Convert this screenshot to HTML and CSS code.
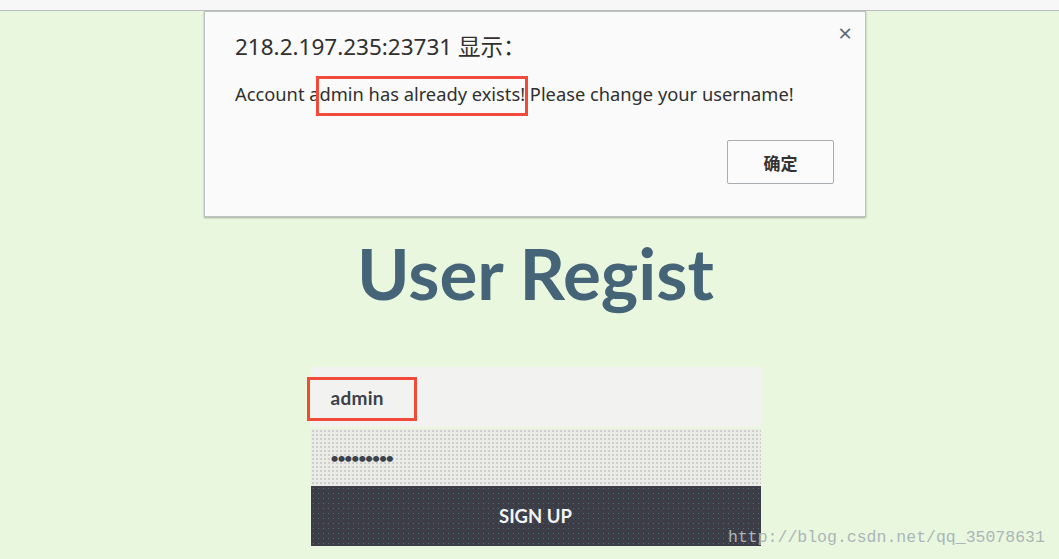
FILE: index.html
```html
<!DOCTYPE html>
<html>
<head>
<meta charset="utf-8">
<link rel="stylesheet" href="styles.css">
</head>
<body>
<div class="topbar"></div>
<main class="page">
  <h1 class="title">User Regist</h1>
  <form class="form">
    <div class="field field-user"><span class="val">admin</span></div>
    <div class="field field-pass"><span class="val dots">•••••••••</span></div>
    <div class="btn-signup">SIGN UP</div>
    <div class="mark mark-user"></div>
  </form>
</main>
<div class="dialog">
  <div class="dlg-title">218.2.197.235:23731 显示：</div>
  <div class="dlg-close">×</div>
  <div class="dlg-msg">Account admin has already exists! Please change your username!</div>
  <div class="mark mark-msg"></div>
  <div class="dlg-actions"><div class="dlg-ok">确定</div></div>
</div>
<div class="watermark">http://blog.csdn.net/qq_35078631</div>
</body>
</html>
```
FILE: styles.css
```css
html, body {
  margin: 0;
  padding: 0;
  width: 1059px;
  height: 559px;
  overflow: hidden;
  background: #e9f7de;
  font-family: "Noto Sans", "Noto Sans CJK SC", sans-serif;
}
body { position: relative; }
.topbar {
  height: 10px;
  background: #f7f7f7;
  border-bottom: 1px solid #b9bdbd;
}
.page {
  display: flex;
  flex-direction: column;
  align-items: center;
}
.title {
  margin: 217px 0 0 0;
  font-family: "Lato", sans-serif;
  font-weight: 700;
  font-size: 71px;
  line-height: 90px;
  color: #456477;
  padding-left: 12px;
}
.form {
  position: relative;
  margin: 49px 0 0 12px;
  width: 450px;
  display: flex;
  flex-direction: column;
}
.field {
  height: 60px;
  display: flex;
  align-items: center;
  padding-left: 20px;
  box-sizing: border-box;
  font-family: "Lato", sans-serif;
  font-weight: 700;
  color: #3b414a;
}
.field-user {
  background: #f2f3f1;
  font-size: 19px;
  letter-spacing: 0.3px;
}
.field-pass {
  margin-top: 2px;
  height: 57px;
  background-color: #ebebe8;
  background-image: radial-gradient(#bfbfbf 0.6px, transparent 0.9px);
  background-size: 4px 4px;
  font-size: 14px;
  letter-spacing: -1.2px;
}
.val { display: inline-block; }
.mark {
  position: absolute;
  border: 3px solid #ef4a3a;
  box-sizing: border-box;
}
.mark-user {
  left: -4px;
  top: 10px;
  width: 110px;
  height: 44px;
}
.btn-signup {
  height: 60px;
  background-color: #3c3d47;
  background-image: radial-gradient(#4a6f80 0.6px, transparent 0.9px);
  background-size: 5px 5px;
  color: #f2f3f3;
  font-family: "Lato", sans-serif;
  font-weight: 700;
  font-size: 18.5px;
  display: flex;
  align-items: center;
  justify-content: center;
}
.dialog {
  position: absolute;
  left: 204px;
  top: 11px;
  width: 662px;
  height: 206px;
  background: #fafafa;
  border: 1px solid #bfc2c2;
  box-shadow: 0 1px 2px rgba(0,0,0,0.3);
  box-sizing: border-box;
  color: #303030;
}
.dlg-title {
  position: absolute;
  left: 30px;
  top: 20px;
  font-size: 22.5px;
  line-height: 30px;
}
.dlg-close {
  position: absolute;
  right: 13px;
  top: 6px;
  font-size: 24px;
  line-height: 30px;
  color: #5a6b75;
}
.dlg-msg {
  position: absolute;
  left: 30px;
  top: 69px;
  font-size: 18.3px;
  line-height: 26px;
  white-space: nowrap;
}
.mark-msg {
  left: 111px;
  top: 64px;
  width: 212px;
  height: 40px;
}
.dlg-actions {
  position: absolute;
  right: 31px;
  top: 128px;
}
.dlg-ok {
  width: 105px;
  height: 42px;
  border: 1px solid #a8adb1;
  border-radius: 2px;
  background: #fbfbfb;
  display: flex;
  align-items: center;
  justify-content: center;
  font-family: "Noto Sans CJK SC", sans-serif;
  font-size: 17px;
  font-weight: 700;
  color: #333;
}
.watermark {
  position: absolute;
  left: 728px;
  top: 528px;
  font-family: "Liberation Mono", monospace;
  font-size: 16.5px;
  color: #aab6b8;
}
```
